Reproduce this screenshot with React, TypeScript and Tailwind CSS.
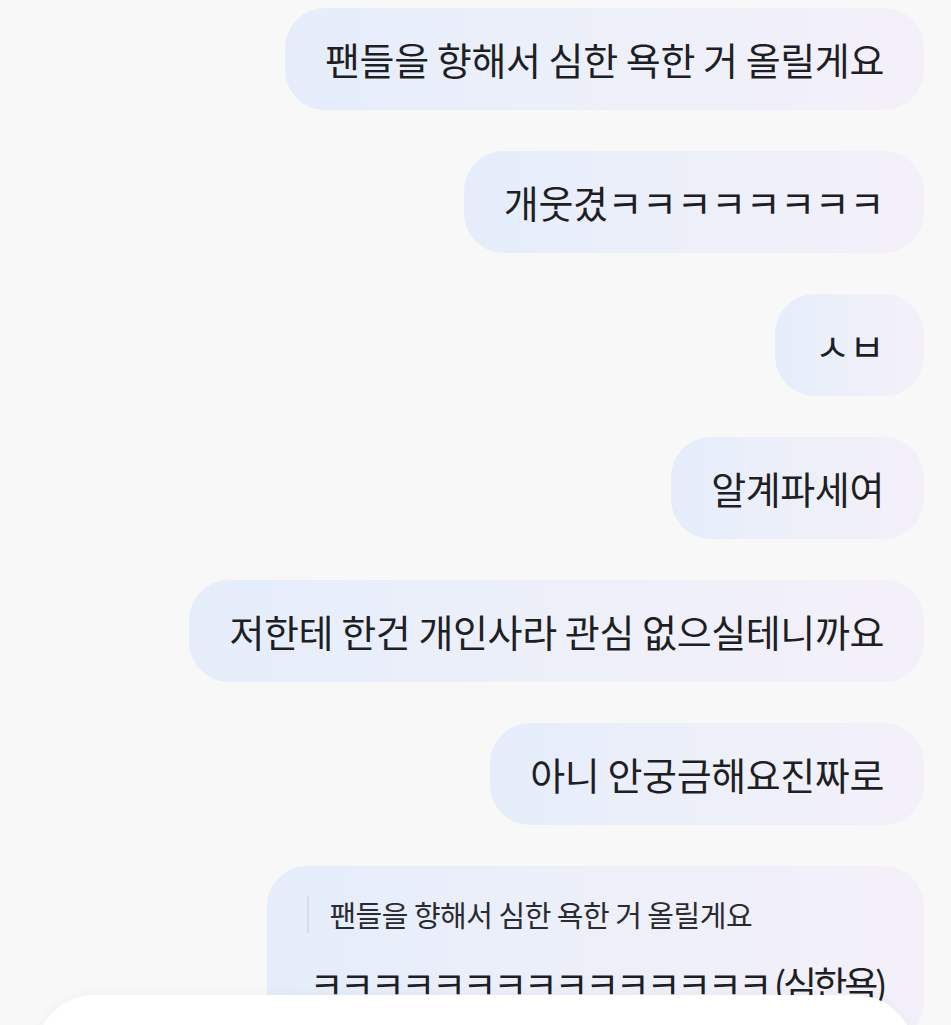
const messages = [
  "팬들을 향해서 심한 욕한 거 올릴게요",
  "개웃겼ㅋㅋㅋㅋㅋㅋㅋㅋ",
  "ㅅㅂ",
  "알계파세여",
  "저한테 한건 개인사라 관심 없으실테니까요",
  "아니 안궁금해요진짜로",
];

const font = { fontFamily: '"Noto Sans CJK KR", "Noto Sans", sans-serif' };

function Bubble({ children }: { children: React.ReactNode }) {
  return (
    <div className="rounded-[40px] bg-gradient-to-r from-[#e5edfb] via-[#edf0f9] to-[#f4f0fa] px-[40px] h-[102px] flex items-center text-[38px] leading-none tracking-[-0.4px] text-[#1e1f24]">
      {children}
    </div>
  );
}

export default function App() {
  return (
    <div className="relative h-[1025px] w-full overflow-hidden bg-[#f8f8f8]" style={font}>
      <div className="flex flex-col items-end gap-[41px] pt-[8px] pr-[27px]">
        {messages.map((m) => (
          <Bubble key={m}>{m}</Bubble>
        ))}

        {/* reply bubble */}
        <div className="rounded-[40px] bg-gradient-to-r from-[#e5edfb] via-[#edf0f9] to-[#f4f0fa] pl-[40px] pr-[40px] pt-[30px] pb-[40px] text-[#1e1f24]">
          <div className="flex items-stretch">
            <div className="w-[2px] bg-[#dcdde2]" />
            <div className="pl-[20px] py-[4px] text-[29px] leading-none tracking-[-0.5px] text-[#2a2b30]">
              팬들을 향해서 심한 욕한 거 올릴게요
            </div>
          </div>
          <div className="mt-[32px] pl-[2px] text-[37px] leading-none tracking-[-3.4px]">
            ㅋㅋㅋㅋㅋㅋㅋㅋㅋㅋㅋㅋㅋㅋㅋ (심한욕)
          </div>
        </div>
      </div>

      {/* bottom sheet overlay */}
      <div className="absolute left-[35px] right-[36px] top-[995px] h-[100px] rounded-t-[60px] bg-white shadow-[0_-2px_12px_rgba(0,0,0,0.03)]" />
    </div>
  );
}
